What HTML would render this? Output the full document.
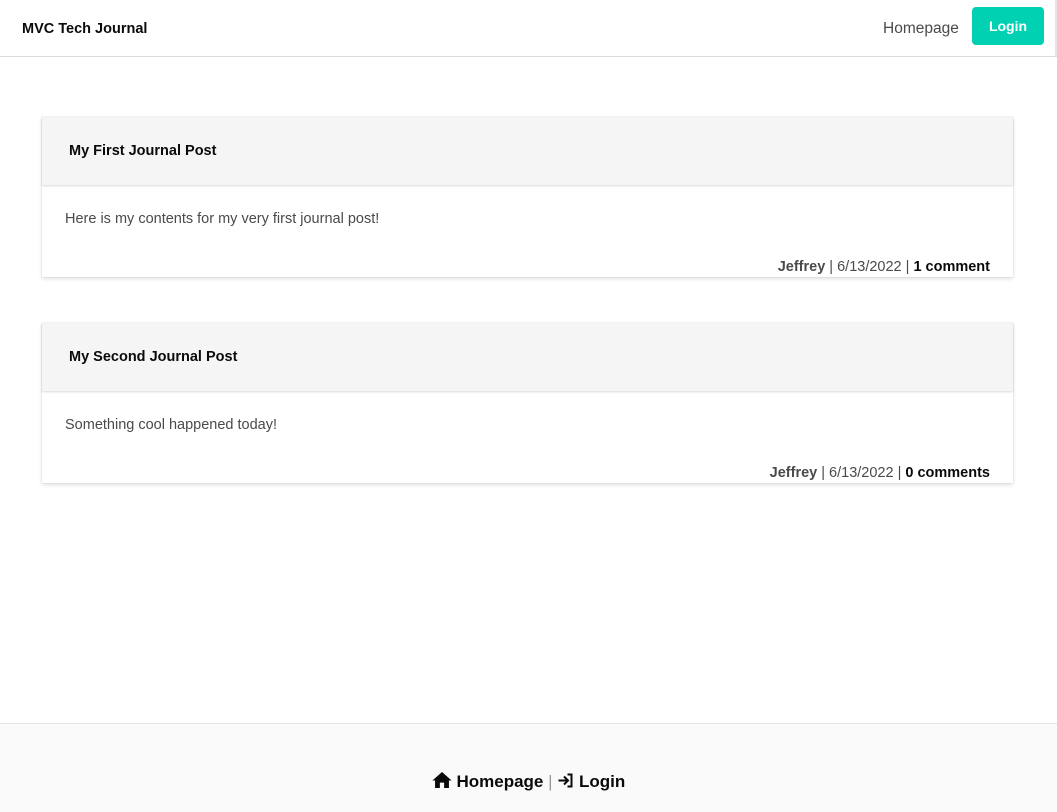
<!DOCTYPE html>
<html><head><style>
body{margin:0;font-family:"Liberation Sans",sans-serif;background:#fff;width:1057px;height:812px;overflow:hidden;position:relative;color:#4a4a4a}
.nav{height:57px;border-bottom:1px solid #dbdbdb;position:relative;border-right:2px solid #e5e5e5;box-sizing:border-box}
.brand{position:absolute;left:22px;top:21px;font-size:14.5px;font-weight:bold;color:#0a0a0a}
.home{position:absolute;left:883px;top:20px;font-size:15.5px;color:#4a4a4a}
.login{position:absolute;left:972px;top:7px;width:72px;height:38px;background:#00d1b2;border-radius:4px;color:#fff;font-weight:bold;font-size:14px;text-align:center;line-height:38px}
.card{position:absolute;left:42px;width:971px;box-shadow:0 2px 4px rgba(10,10,10,.12),0 0 0 1px rgba(10,10,10,.03);background:#fff}
.hd{height:68px;background:#f5f5f5;box-shadow:0 1px 2px rgba(10,10,10,.15);box-sizing:border-box;padding:26px 27px;font-weight:bold;font-size:14.5px;color:#0a0a0a}
.bd{padding:26px 23px 0;font-size:14.5px;height:92px;box-sizing:border-box;position:relative}
.meta{position:absolute;right:23px;bottom:2px;font-size:14.5px;color:#4a4a4a}
.meta b{color:#4a4a4a}.meta b.c{color:#0a0a0a}
.foot{position:absolute;left:0;top:723px;width:1057px;height:89px;background:#fafafa;border-top:1px solid #e5e5e5;text-align:center;font-size:17px;font-weight:bold;color:#0a0a0a;box-sizing:border-box;padding-top:48px}
.foot span.s{font-weight:normal;color:#999}
</style></head><body>
<div class="nav"><div class="brand">MVC Tech Journal</div><div class="home">Homepage</div><div class="login">Login</div></div>
<div class="card" style="top:117px"><div class="hd">My First Journal Post</div><div class="bd">Here is my contents for my very first journal post!<div class="meta"><b>Jeffrey</b> | 6/13/2022 | <b class="c">1 comment</b></div></div></div>
<div class="card" style="top:323px"><div class="hd">My Second Journal Post</div><div class="bd">Something cool happened today!<div class="meta"><b>Jeffrey</b> | 6/13/2022 | <b class="c">0 comments</b></div></div></div>
<div class="foot"><svg width="20" height="16" viewBox="0 0 18 15" style="vertical-align:-1px"><path d="M9 0L0 8h2.5v7h4.5v-5h4v5h4.5V8H18z" fill="#0a0a0a"/></svg> Homepage <span class="s">|</span> <svg width="17" height="15" viewBox="0 0 16 15" style="vertical-align:-1px"><path d="M1 7.5h9M6.5 3.5l4 4-4 4M10 1.5h4v12h-4" stroke="#0a0a0a" stroke-width="2" fill="none"/></svg> Login</div>
</body></html>
